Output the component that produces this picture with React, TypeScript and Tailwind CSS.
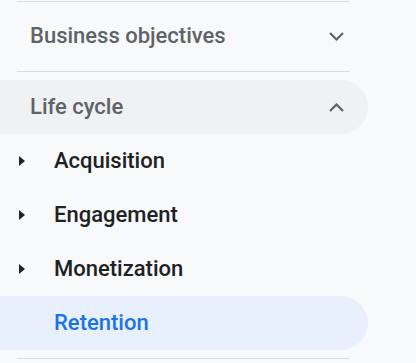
import React from "react";

const Chevron = ({ up }: { up?: boolean }) => (
  <svg width="15" height="9" viewBox="0 0 15 9" className="shrink-0">
    <path
      d={up ? "M1 8 L7.5 1.5 L14 8" : "M1 1 L7.5 7.5 L14 1"}
      fill="none"
      stroke="#5f6368"
      strokeWidth="2.2"
    />
  </svg>
);

const Tri = () => (
  <svg width="6" height="10" viewBox="0 0 6 10" className="shrink-0">
    <path d="M0 0 L6 5 L0 10 Z" fill="#202124" />
  </svg>
);

const Divider = () => <div className="ml-[17px] w-[333px] h-px bg-[#dadce0]" />;

export default function App() {
  const items = ["Acquisition", "Engagement", "Monetization"];
  return (
    <div
      className="w-[416px] h-[363px] bg-[#f8f9fa] pt-px overflow-hidden"
      style={{ fontFamily: "Roboto, 'Open Sans', sans-serif" }}
    >
      <Divider />
      <div className="h-[69px] w-[368px] flex items-center justify-between pl-[30px] pr-[24px]">
        <span className="text-[22px] leading-none font-medium text-[#5f6368] -mt-px">Business objectives</span>
        <Chevron />
      </div>
      <Divider />
      <div className="mt-2 h-[54px] w-[368px] rounded-r-full bg-[#f0f1f3] flex items-center justify-between pl-[30px] pr-[24px]">
        <span className="text-[22px] leading-none font-medium text-[#5f6368]">Life cycle</span>
        <Chevron up />
      </div>
      {items.map((t) => (
        <div key={t} className="h-[54px] w-[368px] flex items-center">
          <div className="w-[54px] pl-[19px] flex items-center">
            <Tri />
          </div>
          <span className="text-[22px] leading-none font-medium text-[#202124]">{t}</span>
        </div>
      ))}
      <div className="h-[54px] w-[368px] rounded-r-full bg-[#e8f0fe] flex items-center pl-[54px]">
        <span className="text-[22px] leading-none font-medium text-[#1a73e8]">Retention</span>
      </div>
      <div className="mt-2">
        <Divider />
      </div>
    </div>
  );
}
